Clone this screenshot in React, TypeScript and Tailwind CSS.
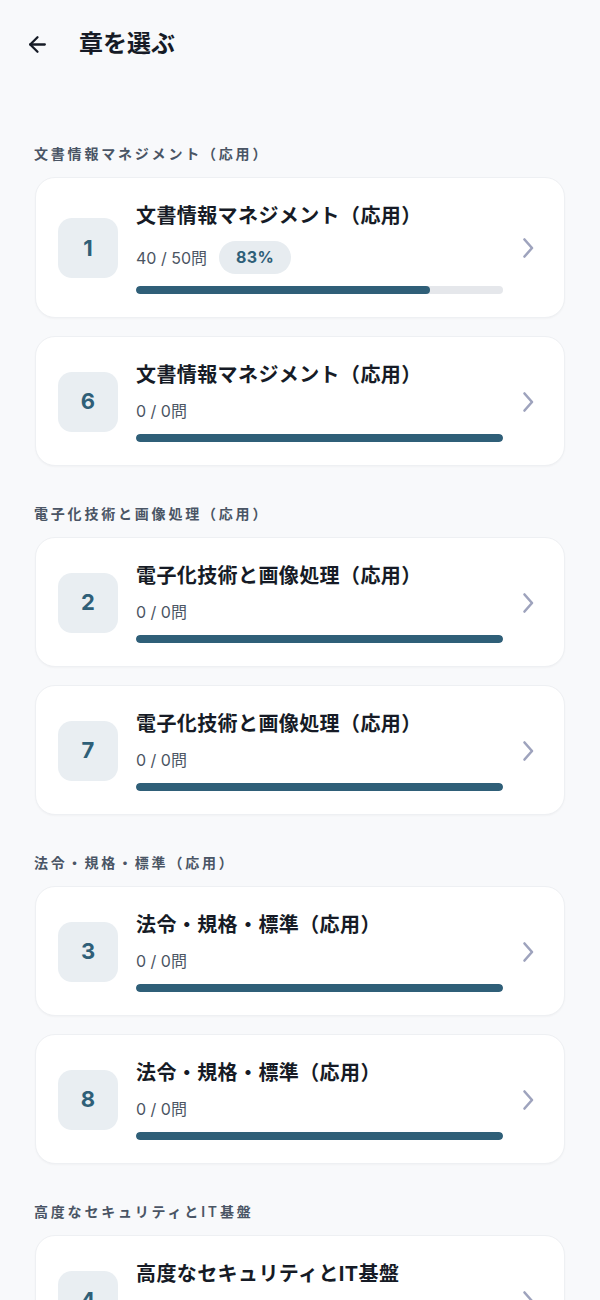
import React from "react";
import { ArrowLeft } from "lucide-react";

type Chapter = { no: number; title: string; done: number; total: number };

const sections: { name: string; chapters: Chapter[] }[] = [
  {
    name: "文書情報マネジメント（応用）",
    chapters: [
      { no: 1, title: "文書情報マネジメント（応用）", done: 40, total: 50 },
      { no: 6, title: "文書情報マネジメント（応用）", done: 0, total: 0 },
    ],
  },
  {
    name: "電子化技術と画像処理（応用）",
    chapters: [
      { no: 2, title: "電子化技術と画像処理（応用）", done: 0, total: 0 },
      { no: 7, title: "電子化技術と画像処理（応用）", done: 0, total: 0 },
    ],
  },
  {
    name: "法令・規格・標準（応用）",
    chapters: [
      { no: 3, title: "法令・規格・標準（応用）", done: 0, total: 0 },
      { no: 8, title: "法令・規格・標準（応用）", done: 0, total: 0 },
    ],
  },
  {
    name: "高度なセキュリティとIT基盤",
    chapters: [{ no: 4, title: "高度なセキュリティとIT基盤", done: 0, total: 0 }],
  },
];

const Chevron = () => (
  <svg width="14" height="22" viewBox="0 0 14 22" fill="none" className="ml-auto shrink-0">
    <polyline
      points="3.5,2.5 11,11 3.5,19.5"
      stroke="#9ea3bd"
      strokeWidth="2.6"
      strokeLinecap="round"
      strokeLinejoin="round"
    />
  </svg>
);

const ChapterCard = ({ c }: { c: Chapter }) => {
  // 0/0 は満了扱いで表示されている
  const pct = c.total === 0 ? 100 : Math.round((c.done / c.total) * 100);
  const showBadge = c.total > 0;
  return (
    <div className="flex items-center rounded-[20px] border border-[#eef0f3] bg-white pt-6 pb-[23px] pl-[22px] pr-[29px] shadow-[0_1px_2px_rgba(15,23,42,0.03)]">
      <div className="flex h-[60px] w-[60px] shrink-0 items-center justify-center rounded-[14px] bg-[#e9eef2] text-[22px] font-bold text-[#2f5f78]">
        {c.no}
      </div>
      <div className="ml-[18px] w-[367px]">
        <div className="whitespace-nowrap text-[20px] font-bold leading-[28px] tracking-[0.02em] text-[#161b26]">
          {c.title}
        </div>
        {showBadge ? (
          <div className="mt-[11px] flex items-center gap-3">
            <span className="text-[16px] leading-5 text-[#4b5563]">
              {c.done} / {c.total}問
            </span>
            <span className="rounded-full bg-[#e7ecf0] px-[17px] py-[6px] text-[16px] font-bold leading-[21px] tracking-wide text-[#2f5f78]">
              83%
            </span>
          </div>
        ) : (
          <div className="mt-3 text-[16px] leading-5 text-[#4b5563]">
            {c.done} / {c.total}問
          </div>
        )}
        <div className={`${showBadge ? "mt-3" : "mt-[13px]"} h-2 w-full overflow-hidden rounded-full bg-[#e5e7eb]`}>
          <div className="h-full rounded-full bg-[#2f5f78]" style={{ width: `${pct}%` }} />
        </div>
      </div>
      <Chevron />
    </div>
  );
};

export default function App() {
  return (
    <div
      className="min-h-[1300px] bg-[#f8f9fb]"
      style={{ fontFamily: '"Inter", "Noto Sans CJK JP", sans-serif' }}
    >
      <header className="flex h-[88px] items-center px-[25px]">
        <ArrowLeft size={25} strokeWidth={2.2} className="text-[#161b26]" />
        <h1 className="ml-[29px] text-[24px] font-bold text-[#161b26]">章を選ぶ</h1>
      </header>
      <main className="px-[35px] pt-[56px]">
        {sections.map((s) => (
          <section key={s.name} className="mb-[38px]">
            <h2 className="mb-[13px] -ml-px text-[14px] font-semibold leading-5 tracking-[0.2em] text-[#4a5565]">
              {s.name}
            </h2>
            <div className="flex flex-col gap-[18px]">
              {s.chapters.map((c) => (
                <ChapterCard key={c.no} c={c} />
              ))}
            </div>
          </section>
        ))}
      </main>
    </div>
  );
}
